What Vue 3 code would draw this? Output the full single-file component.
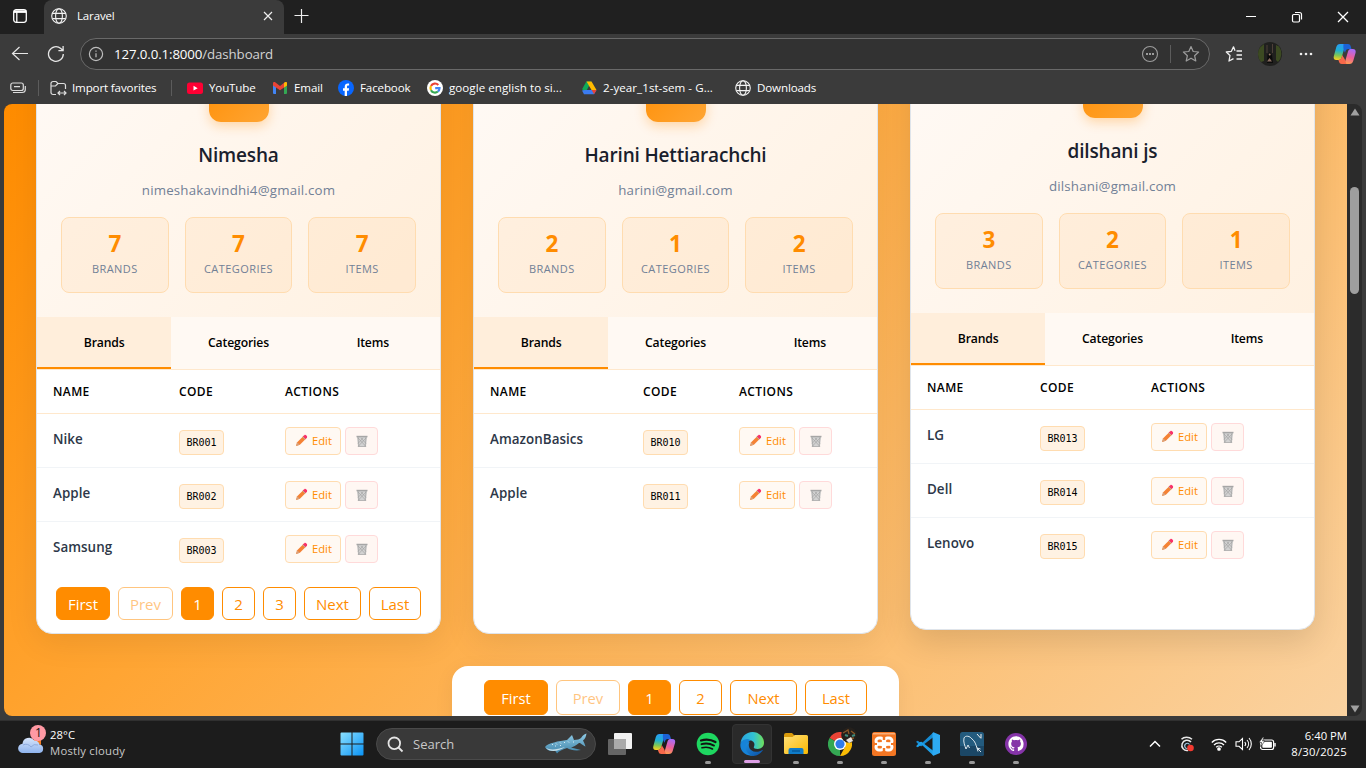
<script setup>
const bookmarks = [
  { label: 'YouTube', icon: 'youtube', w: 85 },
  { label: 'Email', icon: 'gmail', w: 66 },
  { label: 'Facebook', icon: 'facebook', w: 89 },
  { label: 'google english to si...', icon: 'google', w: 154, wide: true },
  { label: '2-year_1st-sem - G...', icon: 'drive', w: 154, wide: true },
  { label: 'Downloads', icon: 'globe', w: 90 },
]

const users = [
  {
    name: 'Nimesha', email: 'nimeshakavindhi4@gmail.com', counts: [7, 7, 7], cols: [126, 106],
    brands: [['Nike', 'BR001'], ['Apple', 'BR002'], ['Samsung', 'BR003']], paged: true,
  },
  {
    name: 'Harini Hettiarachchi', email: 'harini@gmail.com', counts: [2, 1, 2], cols: [153, 96],
    brands: [['AmazonBasics', 'BR010'], ['Apple', 'BR011']],
  },
  {
    name: 'dilshani js', email: 'dilshani@gmail.com', counts: [3, 2, 1], cols: [113, 111], lifted: true,
    brands: [['LG', 'BR013'], ['Dell', 'BR014'], ['Lenovo', 'BR015']],
  },
]
const statLabels = ['BRANDS', 'CATEGORIES', 'ITEMS']

const cardPages = [
  { t: 'First', w: 54, on: true }, { t: 'Prev', w: 55, off: true }, { t: '1', w: 33, on: true },
  { t: '2', w: 33 }, { t: '3', w: 33 }, { t: 'Next', w: 57 }, { t: 'Last', w: 52 },
]
const mainPages = [
  { t: 'First', w: 64, on: true }, { t: 'Prev', w: 64, off: true }, { t: '1', w: 43, on: true },
  { t: '2', w: 43 }, { t: 'Next', w: 67 }, { t: 'Last', w: 62 },
]
const apps = ['taskview', 'copilot', 'spotify', 'edge', 'explorer', 'chrome', 'xampp', 'vscode', 'mysql', 'github']
</script>

<template>
  <div class="screen">
    <svg class="defs" width="0" height="0">
      <defs>
        <linearGradient id="cpA" x1="0.3" y1="0" x2="0.2" y2="1"><stop offset="0" stop-color="#2a9df4" /><stop offset=".4" stop-color="#1fb0d0" /><stop offset=".7" stop-color="#7cc656" /><stop offset="1" stop-color="#ffd21f" /></linearGradient>
        <linearGradient id="cpB" x1="0.6" y1="0" x2="0.3" y2="1"><stop offset="0" stop-color="#a86bf5" /><stop offset=".5" stop-color="#ec5f9a" /><stop offset="1" stop-color="#ffa04a" /></linearGradient>
        <linearGradient id="win" x1="0" y1="0" x2="1" y2="1"><stop offset="0" stop-color="#8be0ff" /><stop offset="1" stop-color="#0a93f5" /></linearGradient>
        <linearGradient id="fold" x1="0" y1="0" x2="1" y2="1"><stop offset="0" stop-color="#ffe07a" /><stop offset="1" stop-color="#f9b800" /></linearGradient>
        <linearGradient id="edgeTop" x1="0" y1="0" x2="1" y2="0"><stop offset="0" stop-color="#2aa3e0" /><stop offset=".55" stop-color="#31c2d4" /><stop offset="1" stop-color="#6fe05a" /></linearGradient>
        <linearGradient id="edgeLow" x1="0" y1="0" x2="1" y2="1"><stop offset="0" stop-color="#1e8fe0" /><stop offset="1" stop-color="#0b4fa3" /></linearGradient>
        <linearGradient id="cloud" x1="0" y1="0" x2="0" y2="1"><stop offset="0" stop-color="#d7e5fb" /><stop offset="1" stop-color="#8fb4ee" /></linearGradient>
        <linearGradient id="shark" x1="0" y1="0" x2="0" y2="1"><stop offset="0" stop-color="#8fcbe6" /><stop offset="1" stop-color="#3f83a8" /></linearGradient>
        <g id="globe" fill="none" stroke="#f2f2f2" stroke-width="1.1"><circle cx="8" cy="8" r="7.3" /><ellipse cx="8" cy="8" rx="3.4" ry="7.3" /><path d="M1.4 5.4h13.2M1.4 10.6h13.2" /></g>
        <g id="copilot">
          <path d="M7 1h8c-1.800 0-2.800 1-3.300 2.700L8.800 14c-.6 2-1.500 3-3.300 3H3.500C1 17 .3 15.300.8 13.200L3.300 4C4 2 5 1 7 1z" fill="url(#cpA)" />
          <path d="M10.500 1H15c1.500 0 2.200.8 2.600 2l.9 3h-3c-1.600 0-2.500.7-3 2.200l-.5 1.600c-1-1.800-2-4-1.500-8.800z" fill="#1c62d6" />
          <path d="M17.500 6h2.200c2.500 0 3.400 1.700 2.900 3.800L20.200 18c-.6 2-1.700 3-3.700 3H9c1.600 0 2.600-.9 3.100-2.500L15 8.500c.5-1.600 1.200-2.500 2.500-2.500z" fill="url(#cpB)" />
          <path d="M13.500 21H8.700c-1.500 0-2.200-.8-2.600-2l-.7-2c1.700 0 2.700-1 3.300-3l.6-2c1 2.500 3 4 3.100 6.500z" fill="#f7684a" />
        </g>
      </defs>
    </svg>

    <header class="tabs">
      <svg class="workspace" width="16" height="16" viewBox="0 0 16 16" fill="none" stroke="#fff" stroke-width="1.300"><rect x="1.700" y="1.700" width="12.600" height="12.600" rx="2.500" /><path d="M1.700 3.600h12.600" stroke-width="2.600" /><path d="M4.800 4v10" /></svg>
      <div class="tab">
        <svg width="16" height="16" viewBox="0 0 16 16"><use href="#globe" /></svg>
        <span>Laravel</span>
        <svg width="10" height="10" viewBox="0 0 10 10" stroke="#eee" stroke-width="1.200"><path d="M1 1l8 8M9 1l-8 8" /></svg>
      </div>
      <svg class="plus" width="16" height="16" viewBox="0 0 16 16" stroke="#eee" stroke-width="1.200"><path d="M7.500 1v14M.5 7.500h14" /></svg>
      <div class="wincontrols">
        <svg width="12" height="12" viewBox="0 0 12 12" stroke="#fff" stroke-width="1"><path d="M1 5.500h10" /></svg>
        <svg width="12" height="12" viewBox="0 0 12 12" stroke="#fff" stroke-width="1.200" fill="none"><rect x="1.500" y="3.500" width="7" height="7.500" rx="1.200" /><path d="M4 1.500h4.500a2 2 0 0 1 2 2V8.500" /></svg>
        <svg width="12" height="12" viewBox="0 0 12 12" stroke="#fff" stroke-width="1.300"><path d="M1 1l10 10M11 1L1 11" /></svg>
      </div>
    </header>

    <div class="toolbar">
      <svg class="back" width="18" height="16" viewBox="0 0 18 16" fill="none" stroke="#e6e6e6" stroke-width="1.200"><path d="M17 7.500H1.500M8.500 1l-7 6.500 7 6.500" /></svg>
      <svg class="reload" width="18" height="18" viewBox="0 0 18 18" fill="none" stroke="#e6e6e6" stroke-width="1.300"><path d="M16.300 9a7.400 7.400 0 1 1-2.500-5.500L16 5.500M16.100 1v4.700h-4.700" /></svg>
      <div class="address">
        <svg width="16" height="16" viewBox="0 0 16 16" fill="none" stroke="#bdbdbd" stroke-width="1.200"><circle cx="8" cy="8" r="6.600" /><path d="M8 7.200v4M8 4.500v1.300" /></svg>
        <span class="url">127.0.0.1:8000<i>/dashboard</i></span>
        <svg class="more" width="18" height="18" viewBox="0 0 18 18" fill="none" stroke="#9c9c9c" stroke-width="1.100"><circle cx="9" cy="9" r="7.500" /><path d="M5 9h2M8 9h2M11 9h2" stroke-width="1.800" /></svg>
        <b></b>
        <svg width="18" height="18" viewBox="0 0 18 18" fill="none" stroke="#9c9c9c" stroke-width="1.200" stroke-linejoin="round"><path d="M9 1.500l2.200 5 5.400.5-4 3.700 1.200 5.300L9 13.200 4.200 16l1.200-5.300-4-3.700 5.400-.5z" /></svg>
      </div>
      <svg class="fav" width="18" height="18" viewBox="0 0 18 18" fill="none" stroke="#f0f0f0" stroke-width="1.300" stroke-linejoin="round"><path d="M10 5.700L8.500 1.800 6.400 6.300 1.300 7l3.700 3.500-1 5.500 4.500-2.400M11.500 6H17M11.500 10H17M11.500 14H17" /></svg>
      <svg class="avatar" width="24" height="24" viewBox="0 0 24 24"><circle cx="12" cy="12" r="12" fill="#20201e" /><path d="M2 5.500A12 12 0 0 0 3 20l3-1V2zM21 4.500a12 12 0 0 1-1 15.500l-2-2V3z" fill="#3c4a22" /><path d="M8.500 3h1v8h-1zM14 2h1v9h-1z" fill="#4d4038" /><path d="M9.500 12.500L12 10l2 3 1 8H9z" fill="#0b0b0b" /><circle cx="11.700" cy="12.500" r="1" fill="#9a7c69" /><path d="M9 19.500l2.500-3.500 2.500 3.500z" fill="#8a6d60" /></svg>
      <svg class="dots" width="14" height="4" viewBox="0 0 14 4" fill="#eee"><circle cx="2" cy="2" r="1.300" /><circle cx="7" cy="2" r="1.300" /><circle cx="12" cy="2" r="1.300" /></svg>
      <svg class="cop" width="24" height="22" viewBox="0 0 24 22"><use href="#copilot" /></svg>
    </div>

    <nav class="favorites">
      <svg class="stack" width="16" height="14" viewBox="0 0 16 14" fill="none" stroke="#ddd" stroke-width="1.200"><rect x=".8" y="2" width="12.500" height="7.500" rx="2" /><path d="M4 5.700h6M3 11.500h9c2.500 0 3.300-1 3.300-3V5" /></svg>
      <i class="sep"></i>
      <svg class="folder" width="17" height="17" viewBox="0 0 17 17" fill="none" stroke="#ddd" stroke-width="1.200"><path d="M6 14.500H3a2 2 0 0 1-2-2v-9a2 2 0 0 1 2-2h3l2 2h5.500a2 2 0 0 1 2 2V9M1 6h4.500L8 3.500M8 13h8M10 11l-2 2 2 2M14 11l2 2-2 2" /></svg>
      <span class="import">Import favorites</span>
      <i class="sep second"></i>
      <a v-for="b in bookmarks" :key="b.label" class="bookmark" :class="{ wide: b.wide }" :style="{ width: b.w + 'px' }">
        <svg width="16" height="16" viewBox="0 0 16 16">
          <template v-if="b.icon === 'youtube'"><rect y="2.500" width="16" height="11.500" rx="2.500" fill="#ff0033" /><path d="M6.500 5.800l4.200 2.400-4.200 2.400z" fill="#fff" /></template>
          <template v-else-if="b.icon === 'gmail'"><path d="M1 3.500h3V14H2a1 1 0 0 1-1-1z" fill="#4285f4" /><path d="M12 3.500h3V13a1 1 0 0 1-1 1h-2z" fill="#34a853" /><path d="M1 3.500c0-1.500 1.500-1.700 2.500-1L8 6l4.500-3.500c1-.7 2.500-.5 2.500 1v2L8 10.300 1 5.500z" fill="#ea4335" /><path d="M12 6V3l1-.7c1-.5 2 0 2 1.200v2L12 7.500z" fill="#fbbc04" /></template>
          <template v-else-if="b.icon === 'facebook'"><circle cx="8" cy="8" r="8" fill="#0866ff" /><path d="M6.700 16v-5.300H5V8.300h1.700V7c0-2.500 1.200-3.600 3.200-3.600l1.200.1v2.100h-.8c-1 0-1.300.4-1.300 1.400v1.300h2.100l-.4 2.400H9V16z" fill="#fff" /></template>
          <template v-else-if="b.icon === 'google'"><circle cx="8" cy="8" r="8" fill="#fff" /><g fill="none" stroke-width="2.200"><path d="M11.300 4.900A4.500 4.500 0 0 0 4 6" stroke="#ea4335" /><path d="M4 6a4.500 4.500 0 0 0 0 4.200" stroke="#fbbc04" /><path d="M4 10.200a4.500 4.500 0 0 0 6.900 1.300" stroke="#34a853" /><path d="M10.900 11.500A4.500 4.500 0 0 0 12.500 8.200H8.200" stroke="#4285f4" /></g></template>
          <template v-else-if="b.icon === 'drive'"><path d="M5.300 1.500h5L4 13.500 1.200 9z" fill="#0fa958" /><path d="M5.500 1.500h5L15.500 10h-5z" fill="#ffba00" /><path d="M4 10h11.500L13 14.300H3L1 10.500z" fill="#3b7bf0" /><path d="M10.600 10h4.900L13 14.300z" fill="#ea4335" /></template>
          <use v-else href="#globe" />
        </svg>
        <span>{{ b.label }}</span>
      </a>
    </nav>

    <main class="viewport">
      <div class="page">
        <div class="cards">
          <section v-for="u in users" :key="u.name" class="card" :class="{ lifted: u.lifted }">
            <div class="profile">
              <div class="badge"></div>
              <h3>{{ u.name }}</h3>
              <p>{{ u.email }}</p>
              <div class="stats">
                <div v-for="(n, i) in u.counts" :key="i" class="stat"><strong>{{ n }}</strong><small>{{ statLabels[i] }}</small></div>
              </div>
            </div>
            <div class="switcher"><span class="active">Brands</span><span>Categories</span><span>Items</span></div>
            <div class="table" :style="{ '--c1': u.cols[0] + 'px', '--c2': u.cols[1] + 'px' }">
              <div class="row head"><span>NAME</span><span>CODE</span><span>ACTIONS</span></div>
              <div v-for="r in u.brands" :key="r[1]" class="row">
                <span class="brand">{{ r[0] }}</span>
                <span><code>{{ r[1] }}</code></span>
                <span class="actions">
                  <button class="edit">
                    <svg width="13" height="13" viewBox="0 0 13 13"><path d="M1 12l1.200-3.800L9 1.500l2.600 2.600-6.700 6.700z" fill="#f58234" /><path d="M1 12l1.200-3.800 2.700 2.600z" fill="#d9a078" /><path d="M8 2.500L9.600 1c.8-.7 3.200 1.500 2.400 2.500l-1.500 1.600z" fill="#f8316a" /><path d="M7.700 2.800l2.600 2.600" stroke="#a7b6c0" stroke-width=".8" /></svg>Edit
                  </button>
                  <button class="trash">
                    <svg width="12" height="12" viewBox="0 0 12 12"><path d="M1 2h10l-1 9.800H2z" fill="#d2d2d2" /><path d="M.5.800h11v1.500H.5z" fill="#a6a6a6" /><path d="M2 3l7.500 8M5 3l5 5.500M10 3L2.500 11M7 3L2 8.500M1.800 11.500h8.400M2 2l.8 9.500M10 2l-.8 9.500" stroke="#9c9c9c" stroke-width=".6" /></svg>
                  </button>
                </span>
              </div>
            </div>
            <div v-if="u.paged" class="pager small"><button v-for="p in cardPages" :key="p.t" :class="{ on: p.on, off: p.off }" :style="{ width: p.w + 'px' }">{{ p.t }}</button></div>
          </section>
        </div>
        <div class="pager large"><button v-for="p in mainPages" :key="p.t" :class="{ on: p.on, off: p.off }" :style="{ width: p.w + 'px' }">{{ p.t }}</button></div>
      </div>
      <div class="scrollbar">
        <svg width="10" height="8" viewBox="0 0 10 8"><path d="M5 .5L9.500 7.500h-9z" fill="#a0a0a0" /></svg>
        <i></i>
        <svg width="10" height="8" viewBox="0 0 10 8"><path d="M5 7.500L.5.500h9z" fill="#a0a0a0" /></svg>
      </div>
    </main>

    <footer class="taskbar">
      <div class="weather">
        <svg width="30" height="32" viewBox="0 0 30 32"><path d="M15 16a5 5 0 0 1 8-2v6z" fill="#f47b20" /><path d="M5 28a4.600 4.600 0 0 1-.5-9.200 6.500 6.500 0 0 1 11.800-3.300 5.500 5.500 0 0 1 5.200 4 4.300 4.300 0 0 1 0 8.500z" fill="url(#cloud)" /><path d="M5 20a6 6 0 0 1 8 2 6 6 0 0 1 7-2" fill="none" stroke="#8faadd" /><circle cx="20" cy="8" r="8" fill="#ff99a4" /><text x="20.500" y="12.300" text-anchor="middle" font-size="12" fill="#111">1</text></svg>
        <div><p>28°C</p><p class="dim">Mostly cloudy</p></div>
      </div>
      <svg class="start" width="24" height="24" viewBox="0 0 24 24"><path d="M1.500.5h10v11H.5v-10a1 1 0 0 1 1-1zM12.500.5h10a1 1 0 0 1 1 1v10h-11zM.5 12.500h11v11h-10a1 1 0 0 1-1-1zM12.500 12.500h11v10a1 1 0 0 1-1 1h-10z" fill="url(#win)" /></svg>
      <div class="search">
        <svg width="17" height="17" viewBox="0 0 17 17" fill="none" stroke="#e5e5e5" stroke-width="1.800"><circle cx="7.300" cy="7.300" r="5.800" /><path d="M11.500 11.500l4 4" /></svg>
        <span>Search</span>
        <svg class="fish" width="42" height="22" viewBox="0 0 42 22"><path d="M0 14c3-4 14-6 22-7l5-5 2 5c3 0 6-1 7-2 2-3 4-4 5.500-4.500C41 4 40 6 38 7.500c1 2 2 4 2.500 6C37 12 36 10 34 10c-4 3-6 4-8 4.500l10 2.500c-5 1-11 0-14-2-5 2-8 3-10 5.500l-2-3c-4 1-8 .5-10-3.500z" fill="url(#shark)" /><path d="M1 15c4 2 10 2 19-1-5 4-15 6-19 1z" fill="#c4dde7" /><path d="M7 11.500l1 0M11 10.500l1 1M15 9.500l1 1M19 9l1 1M23 8.500l1 1M10 13h1M15 12.500h1M28 9h1" stroke="#d8edf5" /></svg>
      </div>
      <div class="apps">
        <div v-for="a in apps" :key="a" class="app" :class="{ current: a === 'edge' }">
          <svg width="24" height="24" viewBox="0 0 24 24">
            <template v-if="a === 'taskview'"><rect x="6" y="1" width="18" height="16" rx="1" fill="#f2f2f2" /><rect y="7" width="18" height="16" rx="1" fill="#656565" /><path d="M6 7h12v10H6z" fill="#aaa" /></template>
            <use v-else-if="a === 'copilot'" href="#copilot" x="0.500" y="1" />
            <template v-else-if="a === 'spotify'"><circle cx="12" cy="12" r="11.300" fill="#1ed760" /><g fill="none" stroke="#121212" stroke-linecap="round"><path d="M5 8.500c5-1.500 10-1 14.500 1.500" stroke-width="2.200" /><path d="M5.500 12.200c4.500-1.300 8.500-.8 12.500 1.400" stroke-width="1.900" /><path d="M6 15.800c4-1 7.300-.6 10.500 1.200" stroke-width="1.600" /></g></template>
            <template v-else-if="a === 'edge'"><path d="M.5 11.500C1 5 6 0 12.500 0 19 0 24 5 24 10.800c0 4-3 6.200-6.200 6.200-2.600 0-4.500-1-4-2 1.200-2 1-5-2.500-6.500C7 7 2 8 .5 11.500z" fill="url(#edgeTop)" /><path d="M.5 11.500C2 7.500 7 6.300 11 8.300c-3 1-4 3.500-4 6 0 4.500 4 8 9.500 8-9 4.500-17.500-3-16-10.800z" fill="#1683d8" /><path d="M9.500 9.800c-2 4 0 9.700 6 10 3 .2 5-.8 6.700-1.800.5-.2.800.2.500.6-2 3-5.500 5.300-9.500 5.300-5-.8-8-5-7.500-10 .2-2 2-3.800 3.800-4.100z" fill="url(#edgeLow)" /></template>
            <template v-else-if="a === 'explorer'"><path d="M0 3a2 2 0 0 1 2-2h6l2.500 2.500H22v6H0z" fill="#d99a0b" /><path d="M0 5h8.500L11 3h11.500A1.500 1.500 0 0 1 24 4.500v16a1.500 1.500 0 0 1-1.500 1.500h-21A1.500 1.500 0 0 1 0 20.500z" fill="url(#fold)" /><path d="M4.500 22v-4a2 2 0 0 1 2-2h11a2 2 0 0 1 2 2v4z" fill="#0f7cc9" /><path d="M8 19h8" stroke="#075a9b" stroke-width="1.500" /></template>
            <template v-else-if="a === 'chrome'"><path d="M12 12L1.600 6A12 12 0 0 1 22.400 6z" fill="#ea4335" /><path d="M12 12L12 24A12 12 0 0 1 1.600 6z" fill="#34a853" /><path d="M12 12L12 6H22.400A12 12 0 0 1 12 24L17 15z" fill="#fbbc04" /><circle cx="12" cy="12" r="6" fill="#fff" /><circle cx="12" cy="12" r="4.600" fill="#2f7bea" /></template>
            <template v-else-if="a === 'xampp'"><rect width="24" height="24" rx="2.500" fill="#f37623" /><path d="M1 1h22v1.500H1z" fill="#f9ad78" /><rect x="4" y="6" width="7.500" height="6" rx="3" fill="none" stroke="#fff" stroke-width="3" /><rect x="12.500" y="6" width="7.500" height="6" rx="3" fill="none" stroke="#fff" stroke-width="3" /><rect x="4" y="12" width="7.500" height="6" rx="3" fill="none" stroke="#fff" stroke-width="3" /><rect x="12.500" y="12" width="7.500" height="6" rx="3" fill="none" stroke="#fff" stroke-width="3" /><path d="M7.500 10.500h9v3h-9z" fill="#fff" /><path d="M10.800 4h2.400v4h-2.400zM10.800 16h2.400v4h-2.400zM2 11h3v2H2zM19 11h3v2h-3z" fill="#f37623" /></template>
            <template v-else-if="a === 'vscode'"><path d="M17.500.3L5.500 11.500 1.800 8.700 0 9.800l4 4.100 1.500.3L17.500 5z" fill="#168bd2" /><path d="M17.500 23.700L5.500 12.500l-3.700 2.800L0 14.200l4-4.100 1.500-.3 12 9.200z" fill="#1d9fe8" /><path d="M17.500.2L24 3v18l-6.500 2.800-1-.8V1z" fill="#2daaf3" /></template>
            <template v-else-if="a === 'mysql'"><rect width="24" height="24" rx="2.500" fill="#235b7e" /><path d="M0 14h24v7.500a2.500 2.500 0 0 1-2.500 2.500h-19A2.500 2.500 0 0 1 0 21.500z" fill="#1b4766" /><path d="M6 17c-1-3-3-7-2-11 1.500-3 6-2 8 1 3 2 4 6 5 9l4 4M6 17l2-4 1.500 3M17 16l3.500 1M17 16l1 3.500" fill="none" stroke="#dce8ef" /><path d="M17 2l4 4.500M21 2v4" stroke="#eee" /></template>
            <template v-else><circle cx="12" cy="12" r="11" fill="#8534a8" /><path transform="translate(4.400 4.300) scale(.95)" d="M8 0C3.580 0 0 3.580 0 8c0 3.540 2.290 6.530 5.470 7.590.4.070.55-.17.55-.38 0-.19-.01-.82-.01-1.490-2.010.37-2.530-.49-2.690-.94-.09-.23-.48-.94-.82-1.130-.28-.15-.68-.52-.01-.53.63-.01 1.080.58 1.230.82.72 1.210 1.870.87 2.330.66.07-.52.28-.87.51-1.070-1.780-.2-3.640-.89-3.640-3.950 0-.87.31-1.590.82-2.150-.08-.2-.36-1.020.08-2.120 0 0 .67-.21 2.200.82.64-.18 1.320-.27 2-.27s1.360.09 2 .27c1.530-1.040 2.200-.82 2.200-.82.44 1.100.16 1.920.08 2.120.51.56.82 1.270.82 2.150 0 3.070-1.870 3.750-3.650 3.950.29.25.54.73.54 1.480 0 1.070-.01 1.930-.01 2.200 0 .21.15.46.55.38A8.010 8.010 0 0 0 16 8c0-4.420-3.580-8-8-8z" fill="#fff" /></template>
          </svg>
          <svg v-if="a === 'chrome'" class="profilepic" width="16" height="16" viewBox="0 0 16 16"><circle cx="8" cy="8" r="7.800" fill="#24201c" /><path d="M2 6l5-3 1 4M10 4l4 3M8 12l5-1" stroke="#8a5626" stroke-width="1.300" fill="none" /><path d="M4 8l3 1M11 9l3-1" stroke="#3f8a7b" stroke-width="2" /><path d="M5 13l5-3 2 4-4 2z" fill="#e7e2dd" /></svg>
          <i v-if="a !== 'taskview' && a !== 'copilot'"></i>
        </div>
      </div>
      <div class="tray">
        <svg class="chev" width="12" height="8" viewBox="0 0 12 8" fill="none" stroke="#fff" stroke-width="1.500"><path d="M1 6.500l5-5 5 5" /></svg>
        <svg class="sync" width="16" height="18" viewBox="0 0 16 18" fill="none" stroke="#e9e9e9" stroke-width="1.500"><path d="M2.500 4.200C5 1.500 10 1.500 13 4.200" /><path d="M12 7A5.200 5.200 0 1 0 9 15.500" /><path d="M10.500 9.500a2.600 2.600 0 1 0-2 4" stroke="#9fc7e0" stroke-width="1.200" /><circle cx="11.500" cy="13" r="3.300" fill="#f33a30" stroke="none" /></svg>
        <svg class="wifi" width="16" height="14" viewBox="0 0 16 14" fill="none" stroke="#fff" stroke-width="1.300"><path d="M.8 5.500a10 10 0 0 1 14.400 0M3 8a7 7 0 0 1 10 0M5.200 10.300a4 4 0 0 1 5.600 0" /><circle cx="8" cy="12" r="1.200" fill="#fff" /></svg>
        <svg class="vol" width="17" height="14" viewBox="0 0 17 14" fill="none" stroke="#fff" stroke-width="1.100"><path d="M1 4.800h3L7.500 1.500v11L4 9.300H1zM9.800 5a3 3 0 0 1 0 4M12 3a6 6 0 0 1 0 8M14 1a9 9 0 0 1 0 12" /></svg>
        <svg class="bat" width="17" height="14" viewBox="0 0 17 14"><rect x="1.600" y="3" width="13" height="9.500" rx="2" fill="none" stroke="#fff" stroke-width="1.200" /><rect x="3.300" y="4.700" width="9.600" height="6.100" rx=".8" fill="#fff" /><path d="M15.300 6h1.400v3.500h-1.400z" fill="#fff" /><path d="M4 0L0 5.500h2.500L1.500 9.500 6 4H3.500L5 0z" fill="#fff" stroke="#1c1c1c" stroke-width=".6" /></svg>
        <div class="clock"><p>6:40 PM</p><p class="date">8/30/2025</p></div>
      </div>
    </footer>
  </div>
</template>

<style>
body { margin: 0; background: #1c1c1c; }
</style>

<style scoped>
* { box-sizing: border-box; }
p, h3 { margin: 0; }
svg { display: block; flex: none; }
.defs { position: absolute; }
.screen { width: 1366px; height: 768px; overflow: hidden; display: flex; flex-direction: column; background: #3b3b3b; font-family: "Open Sans", "Noto Sans", sans-serif; color: #fff; }

.tabs { height: 34px; flex: none; background: #202020; display: flex; align-items: center; }
.workspace { margin: -2px 16px 0 12px; }
.tab { width: 240px; height: 34px; background: #3b3b3b; border-radius: 8px 8px 0 0; display: flex; align-items: center; padding: 0 11px 2px 7px; font-size: 11.500px; letter-spacing: -.15px; }
.tab span { flex: 1; margin: -1px 0 0 10px; }
.plus { margin: -3px 0 0 10px; }
.wincontrols { margin-left: auto; margin-right: 17px; display: flex; gap: 34px; }

.toolbar { height: 40px; flex: none; display: flex; align-items: center; }
.back { margin-left: 11px; }
.reload { margin-left: 18px; }
.address { margin-left: 15px; width: 1130px; height: 32px; border: 1px solid #696969; border-radius: 16px; background: #323232; display: flex; align-items: center; padding: 0 9px 0 7px; }
.url { margin-left: 10px; font-size: 13.300px; letter-spacing: -.12px; flex: 1; }
.url i { font-style: normal; color: #d2d2d2; }
.address b { width: 1px; height: 18px; background: #5c5c5c; margin: 0 11px; }
.fav { margin-left: 15px; }
.avatar { margin-left: 15px; }
.dots { margin-left: 17px; }
.cop { margin-left: 20px; }

.favorites { height: 30px; flex: none; display: flex; align-items: center; padding-bottom: 2px; font-size: 11.600px; letter-spacing: -.15px; white-space: nowrap; }
.favorites span { margin-top: -2px; }
.stack { margin-left: 10px; }
.sep { width: 1px; height: 16px; background: #5c5c5c; margin-left: 12px; }
.folder { margin-left: 11px; }
.import { margin-left: 5px; width: 99px; }
.sep.second { margin: 0 15px 0 0; }
.bookmark { display: flex; align-items: center; gap: 6px; }
.wide { letter-spacing: .04px; }

.viewport { width: 1358px; height: 612px; flex: none; margin-left: 4px; border-radius: 8px; overflow: hidden; display: flex; background: #2b2b2b; }
.page { width: 1343px; height: 612px; overflow: hidden; background: linear-gradient(135deg, #ff8c00 0%, #ffa533 35%, #fad2a0 100%); }
.cards { width: 1279px; margin: -67px auto 0; display: grid; grid-template-columns: repeat(3, 1fr); gap: 32px; }
.card { height: 597px; background: #fff; border: 1px solid #dfe4ea; border-radius: 16px; overflow: hidden; box-shadow: 0 8px 32px rgba(0, 0, 0, .08); color: #000; }
.lifted { transform: translateY(-4px); box-shadow: 0 12px 32px rgba(0, 0, 0, .12); }
.profile { height: 279px; padding: 24px; background: linear-gradient(135deg, #fffaf6, #fff1e1); text-align: center; }
.badge { width: 60px; height: 60px; margin: 0 auto; border-radius: 12px; background: linear-gradient(135deg, #ff8c00, #ffa533); box-shadow: 0 4px 12px rgba(255, 140, 0, .3); }
h3 { margin-top: 18px; font-size: 19px; line-height: 30px; font-weight: 600; color: #1a202c; letter-spacing: -.16px; }
.profile p { margin-top: 9px; font-size: 13.300px; line-height: 22px; color: #718096; letter-spacing: .18px; }
.stats { margin-top: 16px; display: grid; grid-template-columns: repeat(3, 1fr); gap: 16px; }
.stat { height: 76px; border: 1px solid #ffdcb0; border-radius: 8px; background: rgba(255, 140, 0, .07); display: flex; flex-direction: column; align-items: center; padding-top: 11px; }
.stat strong { font-size: 22.500px; line-height: 29px; color: #ff8c00; font-weight: 700; }
.stat small { font-size: 11px; line-height: 22px; color: #718096; letter-spacing: .45px; }
.switcher { height: 53px; display: grid; grid-template-columns: repeat(3, 1fr); background: #fff9f3; border-bottom: 1px solid #ffe8cc; font-size: 12.200px; font-weight: 600; text-align: center; line-height: 52px; letter-spacing: -.15px; }
.active { background: #ffeedb; height: 52px; border-bottom: 2px solid #ff8c00; }
.row { height: 54px; display: grid; grid-template-columns: var(--c1) var(--c2) 1fr; border-bottom: 1px solid #f1f4f7; align-items: center; }
.row > span { padding-left: 16px; }
.row:last-child { border-bottom: 0; padding-bottom: 1px; }
.head { height: 44px; border-color: #ffe8cc; font-size: 12px; font-weight: 600; letter-spacing: .4px; }
.brand { font-size: 13.400px; font-weight: 600; color: #2d3748; padding-bottom: 4px; white-space: nowrap; letter-spacing: .05px; }
code { display: block; width: 45px; height: 25px; margin-top: 3px; border: 1px solid #ffdcb0; border-radius: 4px; background: #fff2e3; font: 10px/24px "DejaVu Sans Mono", monospace; text-align: center; }
.actions { display: flex; gap: 4px; }
button { font-family: inherit; padding: 0; }
.actions button { height: 28px; border: 1px solid #ffdcb0; border-radius: 4px; background: #fff9f3; color: #ff8c00; font-size: 11.200px; display: flex; align-items: center; justify-content: center; gap: 4px; }
.actions .edit { width: 56px; padding-left: 1px; font-weight: 500; }
.actions .trash { width: 33px; border-color: #ffdada; background: #fff7f3; }
.pager { display: flex; gap: 8px; justify-content: center; }
.pager button { height: 33px; border: 1px solid #ff8c00; border-radius: 6px; background: #fff; color: #ff8c00; font-size: 15px; }
.pager .on { background: #ff8c00; color: #fff; }
.pager .off { opacity: .5; }
.small { margin-top: 11px; }
.large { width: 447px; height: 80px; margin: 32px auto 0; padding-top: 14px; border-radius: 16px; background: #fff; box-shadow: 0 4px 20px rgba(0, 0, 0, .06); }
.large button { height: 35px; font-size: 14.700px; }
.scrollbar { width: 15px; height: 612px; display: flex; flex-direction: column; align-items: center; padding: 4px 0 3px; }
.scrollbar i { width: 9px; height: 107px; border-radius: 5px; background: #9e9e9e; margin: 71px 0 auto; }

.taskbar { height: 48px; flex: none; margin-top: 4px; background: #1c1c1c; border-top: 1px solid #303030; padding-bottom: 1px; display: flex; align-items: center; }
.weather { width: 340px; height: 40px; padding-left: 18px; display: flex; gap: 2px; font-size: 11.300px; line-height: 16px; }
.weather svg { margin-top: 1px; }
.weather p { letter-spacing: .05px; }
.weather .dim { color: #c8c8c8; letter-spacing: .22px; }
.weather div { padding-top: 3px; }
.search { margin-left: 12px; width: 220px; height: 32px; border-radius: 16px; background: #393939; border: 1px solid #4a4a4a; display: flex; align-items: center; padding: 0 8px 0 10px; color: #c8c8c8; font-size: 13px; }
.search span { margin-left: 9px; flex: 1; }
.apps { display: flex; margin-left: 2px; }
.app { position: relative; width: 40px; height: 40px; margin: 0 2px; display: flex; align-items: center; justify-content: center; border-radius: 4px; }
.app i { position: absolute; bottom: 0; left: 17px; width: 6px; height: 3px; border-radius: 2px; background: #999; }
.current { background: #2a2a2a; border: 1px solid #333; }
.current i { left: 11px; width: 16px; background: #dd9fe6; }
.profilepic { position: absolute; left: 21px; top: 3px; }
.tray { margin-left: auto; display: flex; align-items: center; }
.sync { margin-left: 18px; }
.wifi { margin-left: 16px; }
.vol { margin-left: 8px; }
.bat { margin-left: 7px; }
.clock { width: 71px; margin-right: 19px; text-align: right; font-size: 11.300px; line-height: 16px; }
.date { letter-spacing: .25px; }
</style>
